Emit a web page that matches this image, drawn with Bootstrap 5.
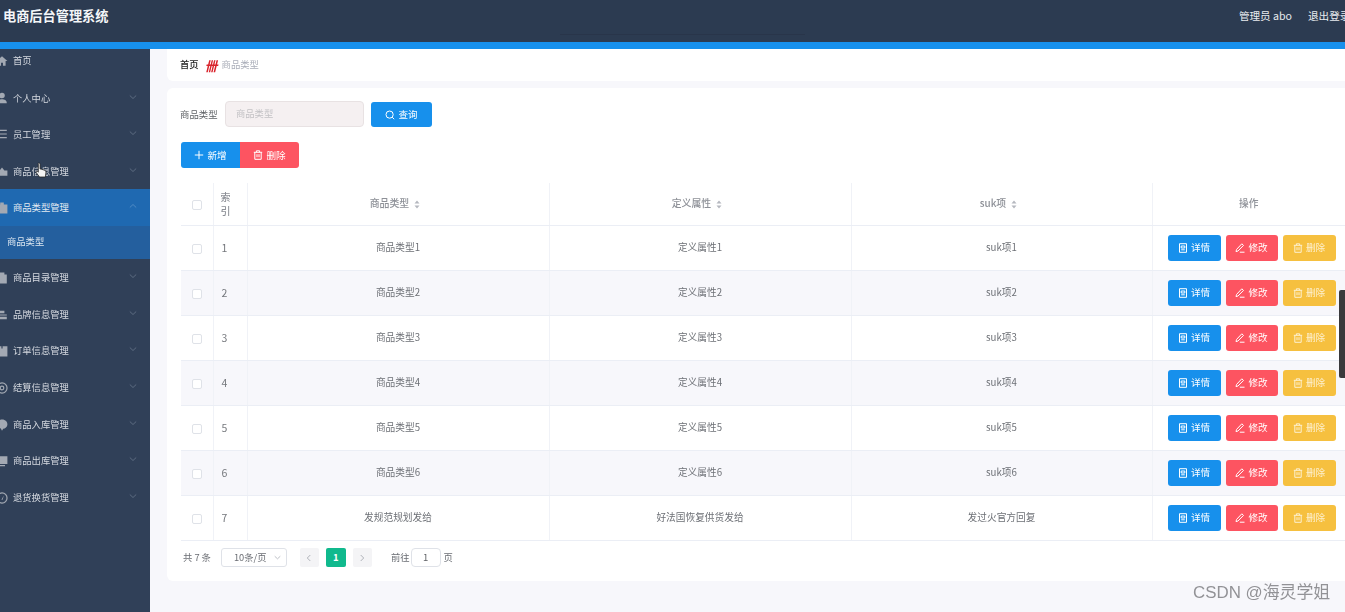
<!DOCTYPE html>
<html lang="zh-CN">
<head>
<meta charset="utf-8">
<title>电商后台管理系统</title>
<link rel="stylesheet" href="https://cdn.jsdelivr.net/npm/bootstrap@5.3.0/dist/css/bootstrap.min.css">
<style>
html,body{height:612px;overflow:hidden}
body{font-family:"Noto Sans CJK SC","Noto Sans",sans-serif;font-size:9.4px;color:#606266;background:#f7f7fb;filter:blur(.35px)}
.topbar{height:49px;background:#2c3b51;border-bottom:7px solid #1790ec;color:#fff}
.brand-name{font-size:13.2px;font-weight:700;padding-left:3px;margin-top:-10px;color:#f4f6f8}
.top-user{font-size:10.6px;color:#e8ebef;margin-top:-10px}
.top-user span:first-child{margin-right:16px}
.top-user span:last-child{white-space:nowrap;width:37px;overflow:hidden}
.top-line{position:absolute;left:560px;top:34px;width:245px;height:1px;background:#29354a}
.side{width:150px;height:563px;background:#304058;color:#d5d9e0}
.side-item{height:36.6px;padding-left:13px;padding-right:13px;position:relative;font-size:9.3px}
.side-item.first{height:30.5px;padding-bottom:7px}
.side-item.side-low{padding-top:2px}
.side-item.open{background:#1f69b1;color:#e2e9f2}
.side-sub{height:33.5px;background:#245f9e;padding:0 0 2px 7px;color:#dce6f0;margin-bottom:.5px;font-size:9.3px}
.side-ico{position:absolute;left:-4px;top:50%;margin-top:-6px;width:12px;height:12px;fill:#a3a9b3}
.side-item.first .side-ico{margin-top:-9px}
.side-arr{width:8px;height:8px;fill:none;stroke:#5d6b80;stroke-width:1;margin-top:-4px}
.open .side-arr{stroke:#4f8ac4}
.main-area{padding-left:17px;min-width:0}
.crumb{height:32px;background:#fff;border-radius:0 0 0 6px;padding-left:13px;margin-bottom:7px;font-size:9.3px}
.crumb b{color:#222;font-weight:500}
.crumb i{font-style:italic;font-weight:700;font-size:13px;color:#d9232b;width:12px;margin:0 5px 0 6px;line-height:1}
.crumb span{color:#a9adb8}
.panel-box{height:493px;background:#fff;border-radius:6px 0 0 6px;padding:13px 0 0 14px}
.query-row{height:26px;margin-bottom:15px}
.query-label{width:45px;margin-left:-1px;color:#5f6266}
.query-input{width:139px;height:26px;background:#f5f0f1;border:1px solid #e8e2e3;border-radius:4px;padding:0 10px;color:#c3c2c5;font-size:9.3px}
.blue-btn,.red-btn,.act-blue,.act-red,.act-yellow{--bs-btn-color:#fff;--bs-btn-hover-color:#fff;--bs-btn-padding-x:0;--bs-btn-padding-y:0;--bs-btn-font-size:9.6px;--bs-btn-border-radius:3px;border:0;display:inline-flex;align-items:center;justify-content:center;gap:3px}
.blue-btn,.act-blue{background:#1790ec}
.red-btn,.act-red{background:#fd5461}
.act-yellow{background:#f6c03f;color:#fdf0d0}
.blue-btn:hover,.act-blue:hover{background:#1790ec}
.query-btn{width:61px;height:25px;margin-left:7px;margin-top:1px}
.tool-btn{width:59px;height:26px}
.tool-row{height:26px;margin-bottom:15px}
.act-blue,.act-yellow{width:53px;height:26px}
.act-red{width:52px;height:26px}
.act-set{gap:5px;padding-left:15px}
.data-table{width:1164px;table-layout:fixed;margin:0;--bs-table-border-color:#ebeef5;--bs-table-color:#606266;--bs-table-bg:transparent;border-collapse:collapse}
.data-table th,.data-table td{padding:0;text-align:center;vertical-align:middle;border-bottom:1px solid #ebeef5;border-right:1px solid #f0f2f7;font-size:9.7px}
.data-table th{height:42px;font-weight:500;color:#8d9097}
.data-table th.sort-col{padding-right:6px;font-size:9.9px}
.data-table td{height:45px;color:#6d7076}
.data-table th:last-child,.data-table td:last-child{border-right:0}
.data-table td.num{font-size:10.5px;text-align:left;padding-left:8px;color:#75787d}
.data-table th.num{text-align:left;padding-left:7px;line-height:14px;font-size:10px}
.alt-row td{background:#f7f7fb}
.tick{display:inline-block;width:10px;height:10px;border:1px solid #dfe2e8;border-radius:2px;background:#fff;vertical-align:middle}
.sort-mark{display:inline-block;vertical-align:middle;margin-left:5px;width:6px;height:9px;fill:#b5b8bf}
.pager{height:34px;padding-left:2px;font-size:9.3px;color:#6b6e74}
.pager-size{width:66px;height:19px;margin-left:10px;margin-right:13px;border:1px solid #dfe2e8;border-radius:3px;padding:0 5px 0 12px;color:#6b6e74}
.pager-size svg{width:7px;height:7px;fill:none;stroke:#b5b8bf}
.pager-btn{width:19px;height:19px;border-radius:2px;background:#f4f4f6}
.pager-btn svg{width:8px;height:8px;fill:none;stroke:#b0b3ba;stroke-width:1}
.pager-now{width:20px;background:#10b98d;color:#fff;font-weight:700;font-size:9.5px;margin:0 7px}
.pager-go{margin-left:19px}
.pager-input{width:30px;height:19px;margin:0 3px 0 1px;border:1px solid #dfe2e8;border-radius:4px;color:#606266;font-size:9.5px}
.btn-ico{width:10px;height:10px;fill:none;stroke:currentColor;stroke-width:1}
.water-mark{position:absolute;left:1193px;top:581px;font-size:16.9px;color:#929296;font-family:"Liberation Sans","Noto Sans CJK SC",sans-serif;line-height:24px;white-space:nowrap}
.scroll-mark{position:absolute;left:1339px;top:290px;width:6px;height:88px;background:#3a3a3c;border-radius:2px 0 0 2px}
.hand-mark{position:absolute;left:35px;top:162px;width:12px;height:16px}
</style>
</head>
<body>
<svg width="0" height="0" class="position-absolute">
<symbol id="i-doc" viewBox="0 0 10 10"><path d="M1.500.7h7v8.600h-7zM3.200 6.800h3.600M3.200 3h3.600v2H3.200z"/></symbol>
<symbol id="i-pen" viewBox="0 0 10 10"><path d="M6.800.8l1.700 1.600L3 8 1 8.600 1.500 6.500zM4.800 9.200H9.500"/></symbol>
<symbol id="i-bin" viewBox="0 0 10 10"><path d="M.8 2.300h8.400M3.400 2.300V.8h3.200v1.500M1.800 2.300v7h6.400v-7M4 4.200v3M6 4.200v3"/></symbol>
<symbol id="i-arr" viewBox="0 0 8 8"><path d="M.8 2.500L4 5.500l3.200-3"/></symbol>
<symbol id="i-prev" viewBox="0 0 8 8"><path d="M5.300 1L2.300 4l3 3"/></symbol>
<symbol id="i-next" viewBox="0 0 8 8"><path d="M2.700 1l3 3-3 3"/></symbol>
<symbol id="i-sort" viewBox="0 0 6 9"><path d="M3 .5L5.500 3.500h-5zM3 8.500L.5 5.500h5z"/></symbol>
</svg>

<header class="topbar d-flex align-items-center justify-content-between position-relative">
  <div class="brand-name">电商后台管理系统</div>
  <div class="top-user d-flex"><span>管理员 abo</span><span>退出登录</span></div>
  <div class="top-line"></div>
</header>

<div class="d-flex">
  <nav class="side flex-shrink-0">
    <div class="side-item first d-flex align-items-center"><svg class="side-ico" viewBox="0 0 10 10"><path d="M5 1L.5 5H2v4h2.200V6.500h1.600V9H8V5h1.500z"/></svg>首页</div>
    <div class="side-item side-low d-flex align-items-center justify-content-between"><svg class="side-ico" viewBox="0 0 10 10"><circle cx="5" cy="3" r="2.300"/><path d="M1 9.300C1 6.800 3 6 5 6s4 .8 4 3.300z"/></svg>个人中心<svg class="side-arr"><use href="#i-arr"/></svg></div>
    <div class="side-item side-low d-flex align-items-center justify-content-between"><svg class="side-ico" viewBox="0 0 10 10"><path d="M1 1.500h8v1H1zM1 4.500h8v1H1zM1 7.500h8v1H1z"/></svg>员工管理<svg class="side-arr"><use href="#i-arr"/></svg></div>
    <div class="side-item side-low d-flex align-items-center justify-content-between"><svg class="side-ico" viewBox="0 0 10 10"><path d="M5 2l2 2.500h2.500V9H.5V4.500H3z"/></svg>商品信息管理<svg class="side-arr"><use href="#i-arr"/></svg></div>
    <div class="side-item open d-flex align-items-center justify-content-between"><svg class="side-ico" viewBox="0 0 10 10"><path d="M.5 2h9v7.500h-9zM3.500.5h3V2h-3z"/></svg>商品类型管理<svg class="side-arr" style="transform:rotate(180deg)"><use href="#i-arr"/></svg></div>
    <div class="side-sub d-flex align-items-center">商品类型</div>
    <div class="side-item d-flex align-items-center justify-content-between"><svg class="side-ico" viewBox="0 0 10 10"><path d="M1 2h8v7.500H1zM3 .5h4V2H3z"/></svg>商品目录管理<svg class="side-arr"><use href="#i-arr"/></svg></div>
    <div class="side-item d-flex align-items-center justify-content-between"><svg class="side-ico" viewBox="0 0 10 10"><path d="M1 1.500h6v2H1zM1 4.500h8v1H1zM1 6.500h8v2H1z"/></svg>品牌信息管理<svg class="side-arr"><use href="#i-arr"/></svg></div>
    <div class="side-item d-flex align-items-center justify-content-between"><svg class="side-ico" viewBox="0 0 10 10"><path d="M.5 1h4v2h1V1h4v8.500h-9z"/></svg>订单信息管理<svg class="side-arr"><use href="#i-arr"/></svg></div>
    <div class="side-item d-flex align-items-center justify-content-between"><svg class="side-ico" viewBox="0 0 10 10"><path fill-rule="evenodd" d="M5 .3a4.700 4.700 0 100 9.400A4.700 4.700 0 005 .3zm0 1a3.700 3.700 0 110 7.400 3.700 3.700 0 010-7.400zM5 3a2 2 0 100 4 2 2 0 000-4zm0 1a1 1 0 110 2 1 1 0 010-2z"/></svg>结算信息管理<svg class="side-arr"><use href="#i-arr"/></svg></div>
    <div class="side-item d-flex align-items-center justify-content-between"><svg class="side-ico" viewBox="0 0 10 10"><path d="M5 .5c3 0 4.500 2 4.500 4S7.500 8 6 8.200L5 9.700 4 8C2 7.500.5 6.500.5 4.500S2 .5 5 .5z"/></svg>商品入库管理<svg class="side-arr"><use href="#i-arr"/></svg></div>
    <div class="side-item d-flex align-items-center justify-content-between"><svg class="side-ico" viewBox="0 0 10 10"><path d="M.5 1h9v6.500h-9zM2.500 8.300h5v1h-5z"/></svg>商品出库管理<svg class="side-arr"><use href="#i-arr"/></svg></div>
    <div class="side-item d-flex align-items-center justify-content-between"><svg class="side-ico" viewBox="0 0 10 10"><path fill-rule="evenodd" d="M5 .3a4.700 4.700 0 100 9.400A4.700 4.700 0 005 .3zm0 1a3.700 3.700 0 110 7.400 3.700 3.700 0 010-7.400zM6.500 3L5.500 6.500h-1z"/></svg>退货换货管理<svg class="side-arr"><use href="#i-arr"/></svg></div>
  </nav>

  <main class="main-area flex-grow-1">
    <div class="crumb d-flex align-items-center"><b>首页</b><i>卌</i><span>商品类型</span></div>
    <section class="panel-box">
      <div class="query-row d-flex align-items-center">
        <div class="query-label">商品类型</div>
        <div class="query-input d-flex align-items-center">商品类型</div>
        <button class="btn blue-btn query-btn"><svg class="btn-ico" viewBox="0 0 10 10"><circle cx="4.600" cy="4.600" r="3.600"/><path d="M7.200 7.200l2 2"/></svg>查询</button>
      </div>
      <div class="tool-row d-flex">
        <button class="btn blue-btn tool-btn rounded-end-0"><svg class="btn-ico" viewBox="0 0 10 10"><path d="M5 .8v8.400M.8 5h8.400"/></svg>新增</button>
        <button class="btn red-btn tool-btn rounded-start-0"><svg class="btn-ico"><use href="#i-bin"/></svg>删除</button>
      </div>
      <table class="table data-table">
        <colgroup><col style="width:32px"><col style="width:34px"><col style="width:302px"><col style="width:302px"><col style="width:301px"><col style="width:193px"></colgroup>
        <thead><tr>
          <th><span class="tick"></span></th><th class="num">索<br>引</th>
          <th class="sort-col">商品类型<svg class="sort-mark"><use href="#i-sort"/></svg></th>
          <th class="sort-col">定义属性<svg class="sort-mark"><use href="#i-sort"/></svg></th>
          <th class="sort-col">suk项<svg class="sort-mark"><use href="#i-sort"/></svg></th>
          <th>操作</th>
        </tr></thead>
        <tbody>
          <tr><td><span class="tick"></span></td><td class="num">1</td><td>商品类型1</td><td>定义属性1</td><td>suk项1</td><td><div class="act-set d-flex"><button class="btn act-blue"><svg class="btn-ico"><use href="#i-doc"/></svg>详情</button><button class="btn act-red"><svg class="btn-ico"><use href="#i-pen"/></svg>修改</button><button class="btn act-yellow"><svg class="btn-ico"><use href="#i-bin"/></svg>删除</button></div></td></tr>
          <tr class="alt-row"><td><span class="tick"></span></td><td class="num">2</td><td>商品类型2</td><td>定义属性2</td><td>suk项2</td><td><div class="act-set d-flex"><button class="btn act-blue"><svg class="btn-ico"><use href="#i-doc"/></svg>详情</button><button class="btn act-red"><svg class="btn-ico"><use href="#i-pen"/></svg>修改</button><button class="btn act-yellow"><svg class="btn-ico"><use href="#i-bin"/></svg>删除</button></div></td></tr>
          <tr><td><span class="tick"></span></td><td class="num">3</td><td>商品类型3</td><td>定义属性3</td><td>suk项3</td><td><div class="act-set d-flex"><button class="btn act-blue"><svg class="btn-ico"><use href="#i-doc"/></svg>详情</button><button class="btn act-red"><svg class="btn-ico"><use href="#i-pen"/></svg>修改</button><button class="btn act-yellow"><svg class="btn-ico"><use href="#i-bin"/></svg>删除</button></div></td></tr>
          <tr class="alt-row"><td><span class="tick"></span></td><td class="num">4</td><td>商品类型4</td><td>定义属性4</td><td>suk项4</td><td><div class="act-set d-flex"><button class="btn act-blue"><svg class="btn-ico"><use href="#i-doc"/></svg>详情</button><button class="btn act-red"><svg class="btn-ico"><use href="#i-pen"/></svg>修改</button><button class="btn act-yellow"><svg class="btn-ico"><use href="#i-bin"/></svg>删除</button></div></td></tr>
          <tr><td><span class="tick"></span></td><td class="num">5</td><td>商品类型5</td><td>定义属性5</td><td>suk项5</td><td><div class="act-set d-flex"><button class="btn act-blue"><svg class="btn-ico"><use href="#i-doc"/></svg>详情</button><button class="btn act-red"><svg class="btn-ico"><use href="#i-pen"/></svg>修改</button><button class="btn act-yellow"><svg class="btn-ico"><use href="#i-bin"/></svg>删除</button></div></td></tr>
          <tr class="alt-row"><td><span class="tick"></span></td><td class="num">6</td><td>商品类型6</td><td>定义属性6</td><td>suk项6</td><td><div class="act-set d-flex"><button class="btn act-blue"><svg class="btn-ico"><use href="#i-doc"/></svg>详情</button><button class="btn act-red"><svg class="btn-ico"><use href="#i-pen"/></svg>修改</button><button class="btn act-yellow"><svg class="btn-ico"><use href="#i-bin"/></svg>删除</button></div></td></tr>
          <tr><td><span class="tick"></span></td><td class="num">7</td><td>发规范规划发给</td><td>好法国恢复供货发给</td><td>发过火官方回复</td><td><div class="act-set d-flex"><button class="btn act-blue"><svg class="btn-ico"><use href="#i-doc"/></svg>详情</button><button class="btn act-red"><svg class="btn-ico"><use href="#i-pen"/></svg>修改</button><button class="btn act-yellow"><svg class="btn-ico"><use href="#i-bin"/></svg>删除</button></div></td></tr>
        </tbody>
      </table>
      <div class="pager d-flex align-items-center">
        <span>共 7 条</span>
        <div class="pager-size d-flex align-items-center justify-content-between">10条/页<svg><use href="#i-arr"/></svg></div>
        <div class="pager-btn d-flex align-items-center justify-content-center"><svg><use href="#i-prev"/></svg></div>
        <div class="pager-btn pager-now d-flex align-items-center justify-content-center">1</div>
        <div class="pager-btn d-flex align-items-center justify-content-center"><svg><use href="#i-next"/></svg></div>
        <span class="pager-go">前往</span>
        <div class="pager-input d-flex align-items-center justify-content-center">1</div>
        <span>页</span>
      </div>
    </section>
  </main>
</div>

<svg class="hand-mark" viewBox="0 0 12 16"><path d="M4 1c.8 0 1.100.5 1.100 1.200V7l1 .1 4 1.300c.7.3 1 .9.9 1.600L10.400 15H4.500L1.200 10.500c-.5-.8.400-1.700 1.300-1l.8.700V2.200C3 1.500 3.300 1 4 1z" fill="#f4f4f4" stroke="#222" stroke-width=".8"/></svg>
<div class="scroll-mark"></div>
<div class="water-mark">CSDN @海灵学姐</div>
<script src="https://cdn.jsdelivr.net/npm/bootstrap@5.3.0/dist/js/bootstrap.bundle.min.js"></script>
</body>
</html>
